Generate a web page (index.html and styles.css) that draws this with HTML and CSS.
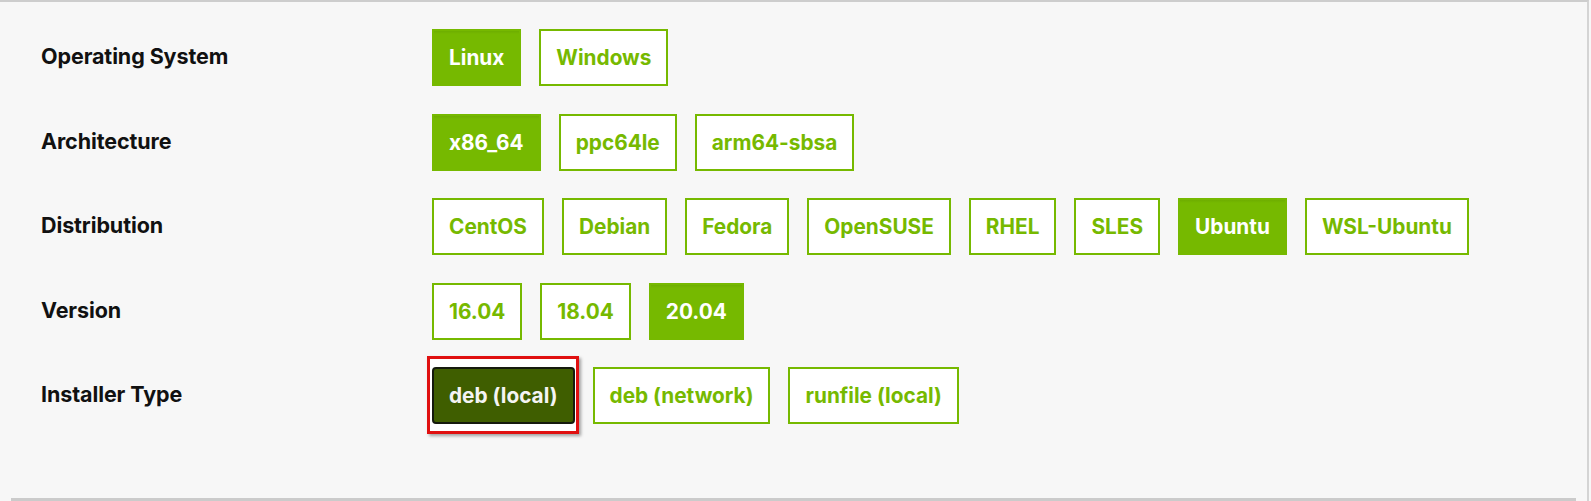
FILE: index.html
```html
<!DOCTYPE html>
<html lang="en">
<head>
<meta charset="utf-8">
<title>CUDA Toolkit Downloads</title>
<link rel="stylesheet" href="styles.css">
</head>
<body>
<div class="frame">
  <div class="selector">
    <div class="row">
      <div class="label">Operating System</div>
      <div class="opts">
        <span class="opt active">Linux</span>
        <span class="opt">Windows</span>
      </div>
    </div>
    <div class="row">
      <div class="label">Architecture</div>
      <div class="opts">
        <span class="opt active">x86_64</span>
        <span class="opt">ppc64le</span>
        <span class="opt">arm64-sbsa</span>
      </div>
    </div>
    <div class="row">
      <div class="label">Distribution</div>
      <div class="opts">
        <span class="opt">CentOS</span>
        <span class="opt">Debian</span>
        <span class="opt">Fedora</span>
        <span class="opt">OpenSUSE</span>
        <span class="opt">RHEL</span>
        <span class="opt">SLES</span>
        <span class="opt active">Ubuntu</span>
        <span class="opt">WSL-Ubuntu</span>
      </div>
    </div>
    <div class="row">
      <div class="label">Version</div>
      <div class="opts">
        <span class="opt">16.04</span>
        <span class="opt">18.04</span>
        <span class="opt active">20.04</span>
      </div>
    </div>
    <div class="row">
      <div class="label">Installer Type</div>
      <div class="opts">
        <span class="highlight"><span class="opt current">deb (local)</span></span>
        <span class="opt">deb (network)</span>
        <span class="opt">runfile (local)</span>
      </div>
    </div>
  </div>
  <div class="bottom-line"></div>
</div>
</body>
</html>
```
FILE: styles.css
```css
html, body {
  margin: 0;
  padding: 0;
  background: #f7f7f7;
}

.frame {
  box-sizing: border-box;
  width: 1589px;
  height: 501px;
  border-top: 2px solid #cdcdcd;
  border-right: 2px solid #d4d4d4;
  display: flex;
  flex-direction: column;
  font-family: "Inter", "Liberation Sans", sans-serif;
  font-weight: 700;
  font-variant-numeric: proportional-nums;
}

.selector {
  padding: 27px 0 0 41px;
  display: flex;
  flex-direction: column;
  gap: 27.5px;
}

.row {
  display: flex;
  align-items: center;
  height: 57px;
}

.label {
  width: 391px;
  flex: none;
  padding-bottom: 3px;
  font-size: 21.5px;
  letter-spacing: -0.1px;
  color: #111;
}

.opts {
  display: flex;
  gap: 18px;
  align-items: center;
}

.opt {
  box-sizing: border-box;
  height: 57px;
  display: flex;
  align-items: center;
  padding: 0 15px;
  border: 2px solid #76b900;
  background: #fff;
  color: #76b900;
  font-size: 20.8px;
  white-space: nowrap;
}

.opt.active {
  background: linear-gradient(#6eae00 0, #76b900 3px);
  color: #fff;
}

.highlight {
  position: relative;
  display: flex;
}

.highlight::before {
  content: "";
  position: absolute;
  top: -11px;
  bottom: -10px;
  left: -5px;
  right: -4px;
  border: 3px solid #e01010;
  background: #fff;
  box-shadow: 2px 2px 3px rgba(0, 0, 0, 0.35);
}

.opt.current {
  position: relative;
  background: #3f5e00;
  border-color: #151a0d;
  border-radius: 4px;
  color: #f4f4f4;
}

.bottom-line {
  margin: auto 0 0 11px;
  width: 1565px;
  height: 3px;
  background: #cbcbcb;
}
```
